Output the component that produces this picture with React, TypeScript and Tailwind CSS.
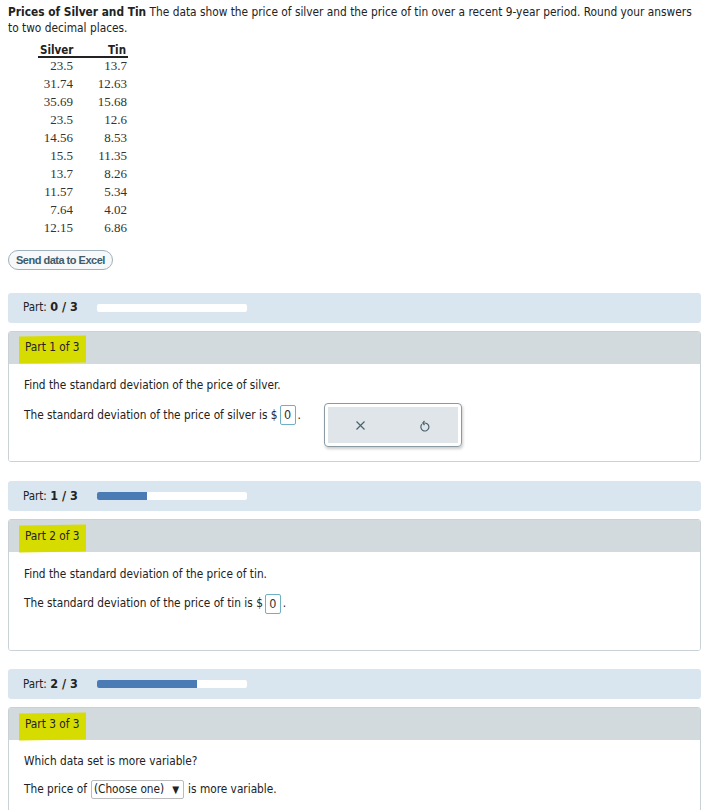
import React from 'react';

const sans = { fontFamily: "'DejaVu Sans Condensed', 'DejaVu Sans', sans-serif" };

const rows: [string, string][] = [
  ['23.5', '13.7'],
  ['31.74', '12.63'],
  ['35.69', '15.68'],
  ['23.5', '12.6'],
  ['14.56', '8.53'],
  ['15.5', '11.35'],
  ['13.7', '8.26'],
  ['11.57', '5.34'],
  ['7.64', '4.02'],
  ['12.15', '6.86'],
];

const ProgressBar = ({ done }: { done: number }) => (
  <div className="flex items-center h-[30px] rounded-[3px] bg-[#d9e5ef] pl-[15px]">
    <span className="text-[11.5px] text-[#222] w-[74px]">
      Part: <span className="font-bold text-[12.5px]">{done} / 3</span>
    </span>
    <div className="w-[150px] h-[8px] rounded-[2px] bg-white overflow-hidden">
      <div className="h-full bg-[#4a7bb5]" style={{ width: `${(done / 3) * 100}%` }} />
    </div>
  </div>
);

const Highlight = ({ children }: { children: React.ReactNode }) => (
  <span className="relative inline-block">
    <span className="absolute -left-[6px] -right-[6px] -top-[3px] -bottom-[6px] bg-[#d7dc00] -skew-y-1" />
    <span className="relative">{children}</span>
  </span>
);

const PartPanel = ({ n, children }: { n: number; children: React.ReactNode }) => (
  <div className="border border-[#c9d2d6] rounded-[3px] overflow-hidden">
    <div className="h-[32px] bg-[#d3dadd] flex items-center pl-[16px] text-[11.75px] text-[#222]">
      <Highlight>Part {n} of 3</Highlight>
    </div>
    <div className="bg-white px-[15px] text-[11.75px] text-[#222]">{children}</div>
  </div>
);

const AnswerBox = () => (
  <span className="inline-flex items-center justify-center w-[16px] h-[20px] border border-[#6fb1c2] rounded-[2px] mx-[2px] text-[12.5px] text-[#333]">0</span>
);

export default function App() {
  return (
    <div className="bg-white min-h-screen pl-[8px] pr-[4px] pt-[4px] text-[#222]" style={sans}>
      <p className="text-[11.8px] leading-[16px] text-[#222] pr-[4px]">
        <span className="font-bold">Prices of Silver and Tin</span> The data show the price of silver and the price of tin over a recent 9-year period. Round your answers to two decimal places.
      </p>

      <div className="mt-[8px] ml-[30px] w-[90px]">
        <div className="flex justify-between border-b-2 border-[#222] text-[11.5px] font-bold leading-[12px] px-[2px]">
          <span>Silver</span>
          <span>Tin</span>
        </div>
        <div className="text-[13px] text-[#333] -mt-[1px]" style={{ fontFamily: "'Liberation Serif', serif" }}>
          {rows.map(([s, t], i) => (
            <div key={i} className="flex h-[18px] items-center">
              <span className="w-[35px] text-right">{s}</span>
              <span className="flex-1 text-right pr-[1px]">{t}</span>
            </div>
          ))}
        </div>
      </div>

      <button className="mt-[13px] h-[20px] px-[7px] rounded-full border border-[#9fb1bb] bg-[#f6f8f9] text-[11px] font-bold text-[#3f5b6b] tracking-[-0.5px]" style={{ fontFamily: "'Liberation Sans', Arial, sans-serif" }}>
        Send data to Excel
      </button>

      <div className="mt-[22px] flex flex-col">
        <ProgressBar done={0} />
        <div className="mt-[8px]">
          <PartPanel n={1}>
            <p className="pt-[13px]">Find the standard deviation of the price of silver.</p>
            <div className="flex items-start mt-[10px] pb-[14px]">
              <p className="pt-[1px] flex items-center">
                The standard deviation of the price of silver is $<AnswerBox />.
              </p>
              <div className="ml-[23px] -mt-[1px] w-[138px] h-[44px] border border-[#8a9aa2] rounded-[4px] p-[3px] shadow-[1px_2px_3px_rgba(0,0,0,0.2)]">
                <div className="h-full bg-[#dfe5e8] flex items-center justify-around text-[#4b6370]">
                  <svg width="11" height="11" viewBox="0 0 11 11" fill="none" stroke="currentColor" strokeWidth="1.2">
                    <path d="M1.5 1.5 L9.5 9.5 M9.5 1.5 L1.5 9.5" />
                  </svg>
                  <svg width="12" height="13" viewBox="0 0 12 13" fill="none" stroke="currentColor" strokeWidth="1.2">
                    <path d="M3 5.2 A4 4 0 1 0 6 4 L4.2 4" />
                    <path d="M5.5 1.8 L3.8 4 L5.5 6" />
                  </svg>
                </div>
              </div>
            </div>
          </PartPanel>
        </div>

        <div className="mt-[19px]">
          <ProgressBar done={1} />
        </div>
        <div className="mt-[8px]">
          <PartPanel n={2}>
            <div className="h-[98px]">
              <p className="pt-[14px]">Find the standard deviation of the price of tin.</p>
              <p className="mt-[10px] flex items-center">
                The standard deviation of the price of tin is $<AnswerBox />.
              </p>
            </div>
          </PartPanel>
        </div>

        <div className="mt-[18px]">
          <ProgressBar done={2} />
        </div>
        <div className="mt-[8px]">
          <PartPanel n={3}>
            <div className="h-[80px]">
              <p className="pt-[13px]">Which data set is more variable?</p>
              <p className="mt-[9px] flex items-center">
                The price of
                <span className="inline-flex items-center h-[19px] mx-[4px] px-[2px] border border-[#bbb] rounded-[2px] text-[11.75px]">
                  (Choose one)<span className="ml-[8px] mr-[2px] text-[10px]">▼</span>
                </span>
                is more variable.
              </p>
            </div>
          </PartPanel>
        </div>
      </div>
    </div>
  );
}
